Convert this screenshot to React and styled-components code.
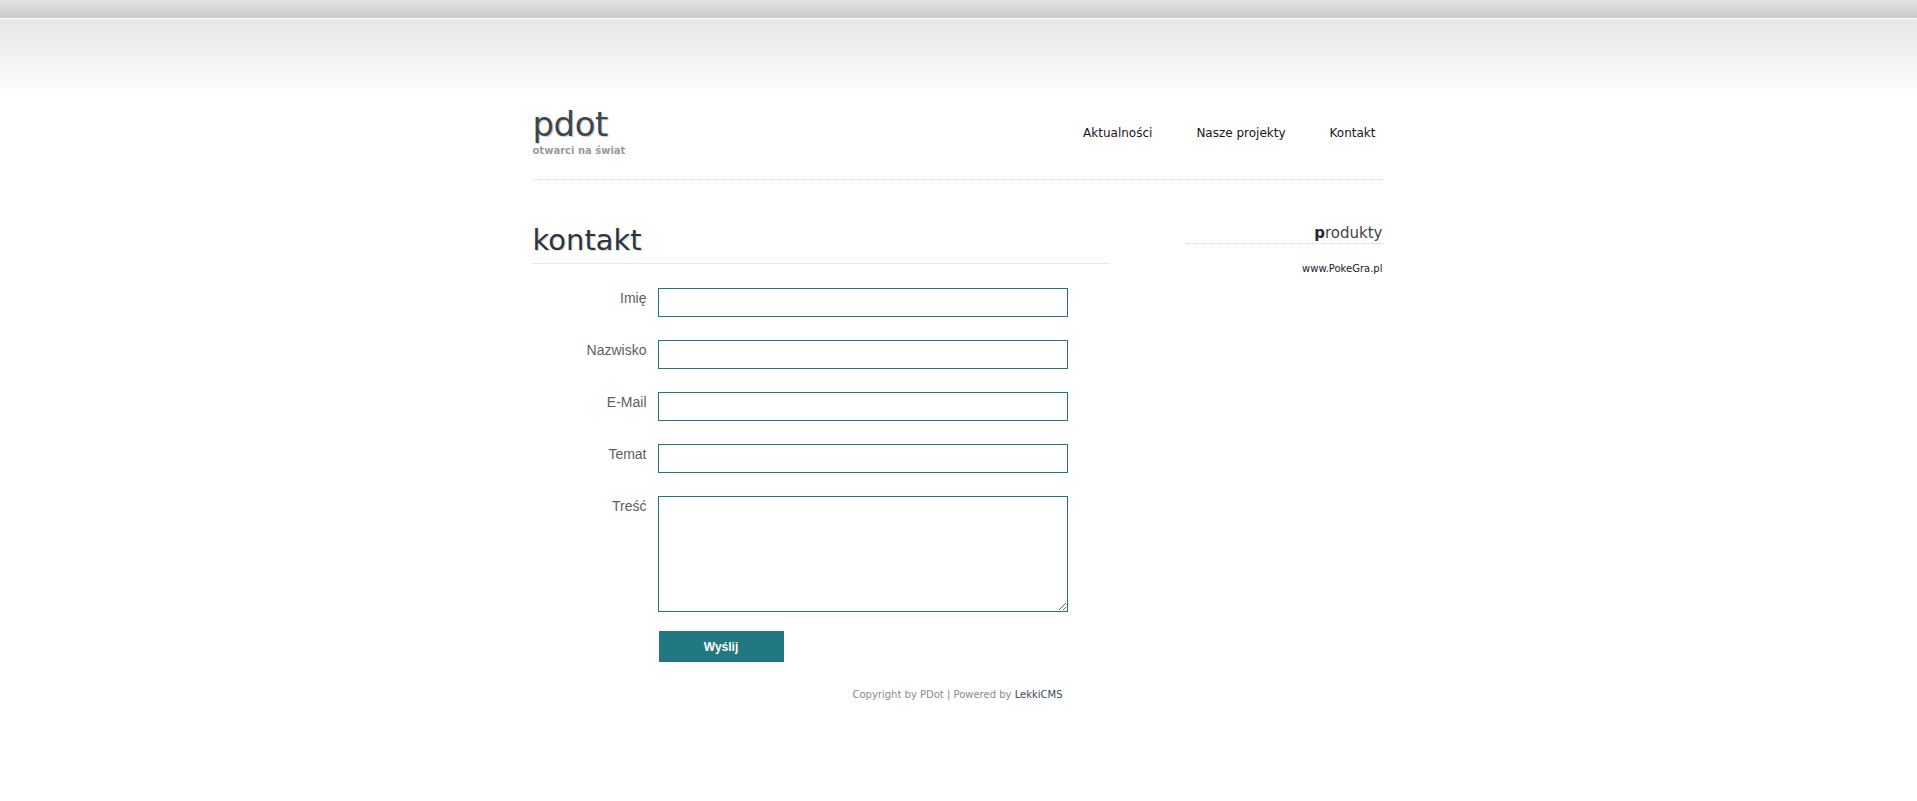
import React from "react";
import styled, { createGlobalStyle } from "styled-components";

const GlobalStyle = createGlobalStyle`
  html, body {
    margin: 0;
    padding: 0;
  }
  body {
    font-family: "DejaVu Sans", "Noto Sans", sans-serif;
    background:
      linear-gradient(#e4e4e4, #c9c9c9) 0 0 / 100% 18px no-repeat,
      linear-gradient(#e7e7e7, #ffffff) 0 19px / 100% 80px no-repeat,
      #ffffff;
    min-height: 801px;
  }
`;

const Page = styled.div`
  box-sizing: border-box;
  width: 850px;
  margin: 0 auto;
  padding-top: 104px;
  position: relative;
  left: -1px;
`;

const Header = styled.header`
  display: flex;
  justify-content: space-between;
  align-items: flex-start;
  height: 75px;
  border-bottom: 1px dotted #d6d6d6;
`;

const Logo = styled.div`
  display: flex;
  flex-direction: column;
`;

const LogoTitle = styled.h1`
  margin: 0;
  font-size: 34px;
  line-height: 40px;
  font-weight: normal;
  color: #444;
  text-shadow: 1px 1px 0 #b9d3ea;
  letter-spacing: -0.5px;
`;

const Slogan = styled.span`
  font-size: 10px;
  font-weight: bold;
  color: #9a9a9a;
  line-height: 12px;
  margin-top: 1px;
`;

const Nav = styled.nav`
  display: flex;
  gap: 44px;
  padding: 22px 7px 0 0;
`;

const NavLink = styled.a`
  font-size: 12px;
  color: #1c1320;
  text-decoration: none;
`;

const Main = styled.div`
  display: flex;
  align-items: flex-start;
  padding-top: 40px;
`;

const Content = styled.section`
  width: 576px;
`;

const Heading = styled.h2`
  margin: 0 0 24px;
  font-size: 29px;
  line-height: 40px;
  font-weight: normal;
  color: #333;
  text-shadow: 1px 1px 0 #c4dcef;
  border-bottom: 1px dotted #d6d6d6;
  padding-bottom: 3px;
`;

const Form = styled.form`
  display: flex;
  flex-direction: column;
  gap: 23px;
`;

const Row = styled.div`
  display: flex;
  align-items: flex-start;
  gap: 11px;
`;

const Label = styled.label`
  width: 114px;
  text-align: right;
  font-family: "Liberation Sans", Arial, sans-serif;
  font-size: 14px;
  color: #5e5e5e;
  padding-top: 2px;
`;

const Input = styled.input`
  box-sizing: border-box;
  width: 410px;
  height: 29px;
  margin: 0;
  border: 1px solid #21747c;
  background: #fff;
  outline: none;
`;

const TextArea = styled.textarea`
  box-sizing: border-box;
  width: 410px;
  height: 116px;
  margin: 0;
  border: 1px solid #21747c;
  background: #fff;
  outline: none;
`;

const Button = styled.button`
  margin: -4px 0 0 126px;
  width: 125px;
  height: 31px;
  border: none;
  background: #217880;
  color: #fff;
  font-family: "Liberation Sans", Arial, sans-serif;
  font-size: 12px;
  font-weight: bold;
`;

const Sidebar = styled.aside`
  width: 196px;
  margin-left: auto;
  text-align: right;
  padding-top: 3px;
`;

const SideTitle = styled.h3`
  margin: 0 0 13px;
  font-size: 15px;
  font-weight: normal;
  color: #444;
  line-height: 20px;
  border-bottom: 1px dotted #d6d6d6;
  b {
    color: #2b2233;
  }
`;

const SideLink = styled.a`
  font-size: 10px;
  color: #222;
  text-decoration: none;
`;

const Footer = styled.footer`
  text-align: center;
  font-size: 10px;
  color: #8a8a8a;
  padding-top: 27px;
  a {
    color: #3d4a5c;
    text-decoration: none;
  }
`;

const fields = ["Imię", "Nazwisko", "E-Mail", "Temat"];

export default function App() {
  return (
    <>
      <GlobalStyle />
      <Page>
        <Header>
          <Logo>
            <LogoTitle>pdot</LogoTitle>
            <Slogan>otwarci na świat</Slogan>
          </Logo>
          <Nav>
            <NavLink href="#">Aktualności</NavLink>
            <NavLink href="#">Nasze projekty</NavLink>
            <NavLink href="#">Kontakt</NavLink>
          </Nav>
        </Header>
        <Main>
          <Content>
            <Heading>kontakt</Heading>
            <Form onSubmit={(e) => e.preventDefault()}>
              {fields.map((f) => (
                <Row key={f}>
                  <Label>{f}</Label>
                  <Input type="text" />
                </Row>
              ))}
              <Row>
                <Label>Treść</Label>
                <TextArea />
              </Row>
              <Button type="submit">Wyślij</Button>
            </Form>
          </Content>
          <Sidebar>
            <SideTitle>
              <b>p</b>rodukty
            </SideTitle>
            <SideLink href="#">www.PokeGra.pl</SideLink>
          </Sidebar>
        </Main>
        <Footer>
          Copyright by PDot | Powered by <a href="#">LekkiCMS</a>
        </Footer>
      </Page>
    </>
  );
}
